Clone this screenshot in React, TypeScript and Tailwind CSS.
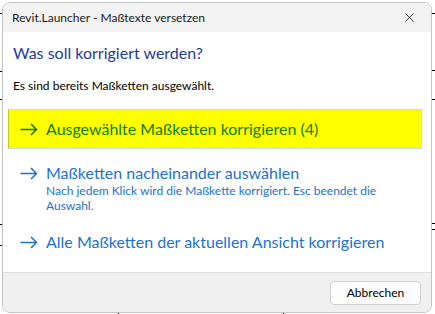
import React from 'react';
import { X } from 'lucide-react';

const font = { fontFamily: 'Lato, "Noto Sans", sans-serif' };

function Arrow({ color }: { color: string }) {
    return (
        <svg width="18" height="13" viewBox="0 0 18 13" fill="none" className="shrink-0">
            <path d="M0.5 6.5H16.5M11 1L16.5 6.5L11 12" stroke={color} strokeWidth="1.5" />
        </svg>
    );
}

// bits of the drawing behind the dialog
const ticks = [
    { cls: 'left-0 top-[13px] w-[3px] h-px' },
    { cls: 'left-0 top-[71px] w-[3px] h-px' },
    { cls: 'left-0 top-[99px] w-[3px] h-px' },
    { cls: 'left-0 top-[224px] w-[3px] h-px' },
    { cls: 'left-0 top-[245px] w-[3px] h-px' },
    { cls: 'right-0 top-[13px] w-[3px] h-px' },
    { cls: 'right-0 top-[70px] w-[3px] h-px' },
    { cls: 'right-0 top-[99px] w-[3px] h-px' },
    { cls: 'right-0 top-[223px] w-[3px] h-px' },
    { cls: 'right-0 top-[229px] w-[3px] h-px' },
    { cls: 'left-[118px] bottom-0 w-px h-[2px]' },
    { cls: 'left-[283px] bottom-0 w-px h-[2px]' },
];

export default function App() {
    return (
        <div className="relative w-[435px] h-[314px] bg-white overflow-hidden" style={font}>
            {ticks.map((t, i) => (
                <div key={i} className={`absolute bg-black ${t.cls}`} />
            ))}

            <div className="pl-[2px] pt-[2px]">
                <div className="relative w-[430px] h-[311px] rounded-[8px] border border-[#c4c4c4] overflow-hidden flex flex-col bg-white">
                    {/* title bar */}
                    <div className="h-[29px] bg-[#f3f3f3] flex items-center justify-between pl-[9px] pr-[14px]">
                        <span className="text-[12px] text-[#1a1a1a]">Revit.Launcher - Maßtexte versetzen</span>
                        <X className="w-[15px] h-[15px] text-[#222]" strokeWidth={1.3} />
                    </div>

                    {/* content */}
                    <div className="flex-1 pt-[11px] px-[5px]">
                        <h1 className="pl-[5px] text-[16px] leading-[20px] text-[#1e3a9e]">Was soll korrigiert werden?</h1>
                        <p className="pl-[5px] mt-[15px] text-[12px] leading-[16px] text-black">Es sind bereits Maßketten ausgewählt.</p>

                        <div className="mt-[15px] w-[414px] h-[40px] bg-[#ffff00] border border-[#c6dcef] border-l-[#b8c830] flex items-center gap-[8px] pl-[11px]">
                            <Arrow color="#0d7a0d" />
                            <span className="text-[16px] text-[#0f800f]">Ausgewählte Maßketten korrigieren (4)</span>
                        </div>

                        <div className="mt-[13px] pl-[12px] flex gap-[8px]">
                            <div className="pt-[5px]"><Arrow color="#1a73d1" /></div>
                            <div>
                                <div className="text-[16px] leading-[21px] text-[#1a73d1]">Maßketten nacheinander auswählen</div>
                                <div className="text-[12px] leading-[15px] text-[#1a73d1] w-[340px]">
                                    Nach jedem Klick wird die Maßkette korrigiert. Esc beendet die Auswahl.
                                </div>
                            </div>
                        </div>

                        <div className="mt-[18px] pl-[12px] flex items-center gap-[8px]">
                            <Arrow color="#1a73d1" />
                            <span className="text-[16px] leading-[22px] text-[#1a73d1]">Alle Maßketten der aktuellen Ansicht korrigieren</span>
                        </div>
                    </div>

                    {/* footer */}
                    <div className="h-[40px] bg-[#f0f0f0] border-t border-[#dfdfdf] flex items-center justify-end pr-[10px]">
                        <button className="w-[91px] h-[24px] rounded-[4px] border border-[#d0d0d0] bg-[#fdfdfd] text-[12px] text-black">
                            Abbrechen
                        </button>
                    </div>
                </div>
            </div>
        </div>
    );
}
